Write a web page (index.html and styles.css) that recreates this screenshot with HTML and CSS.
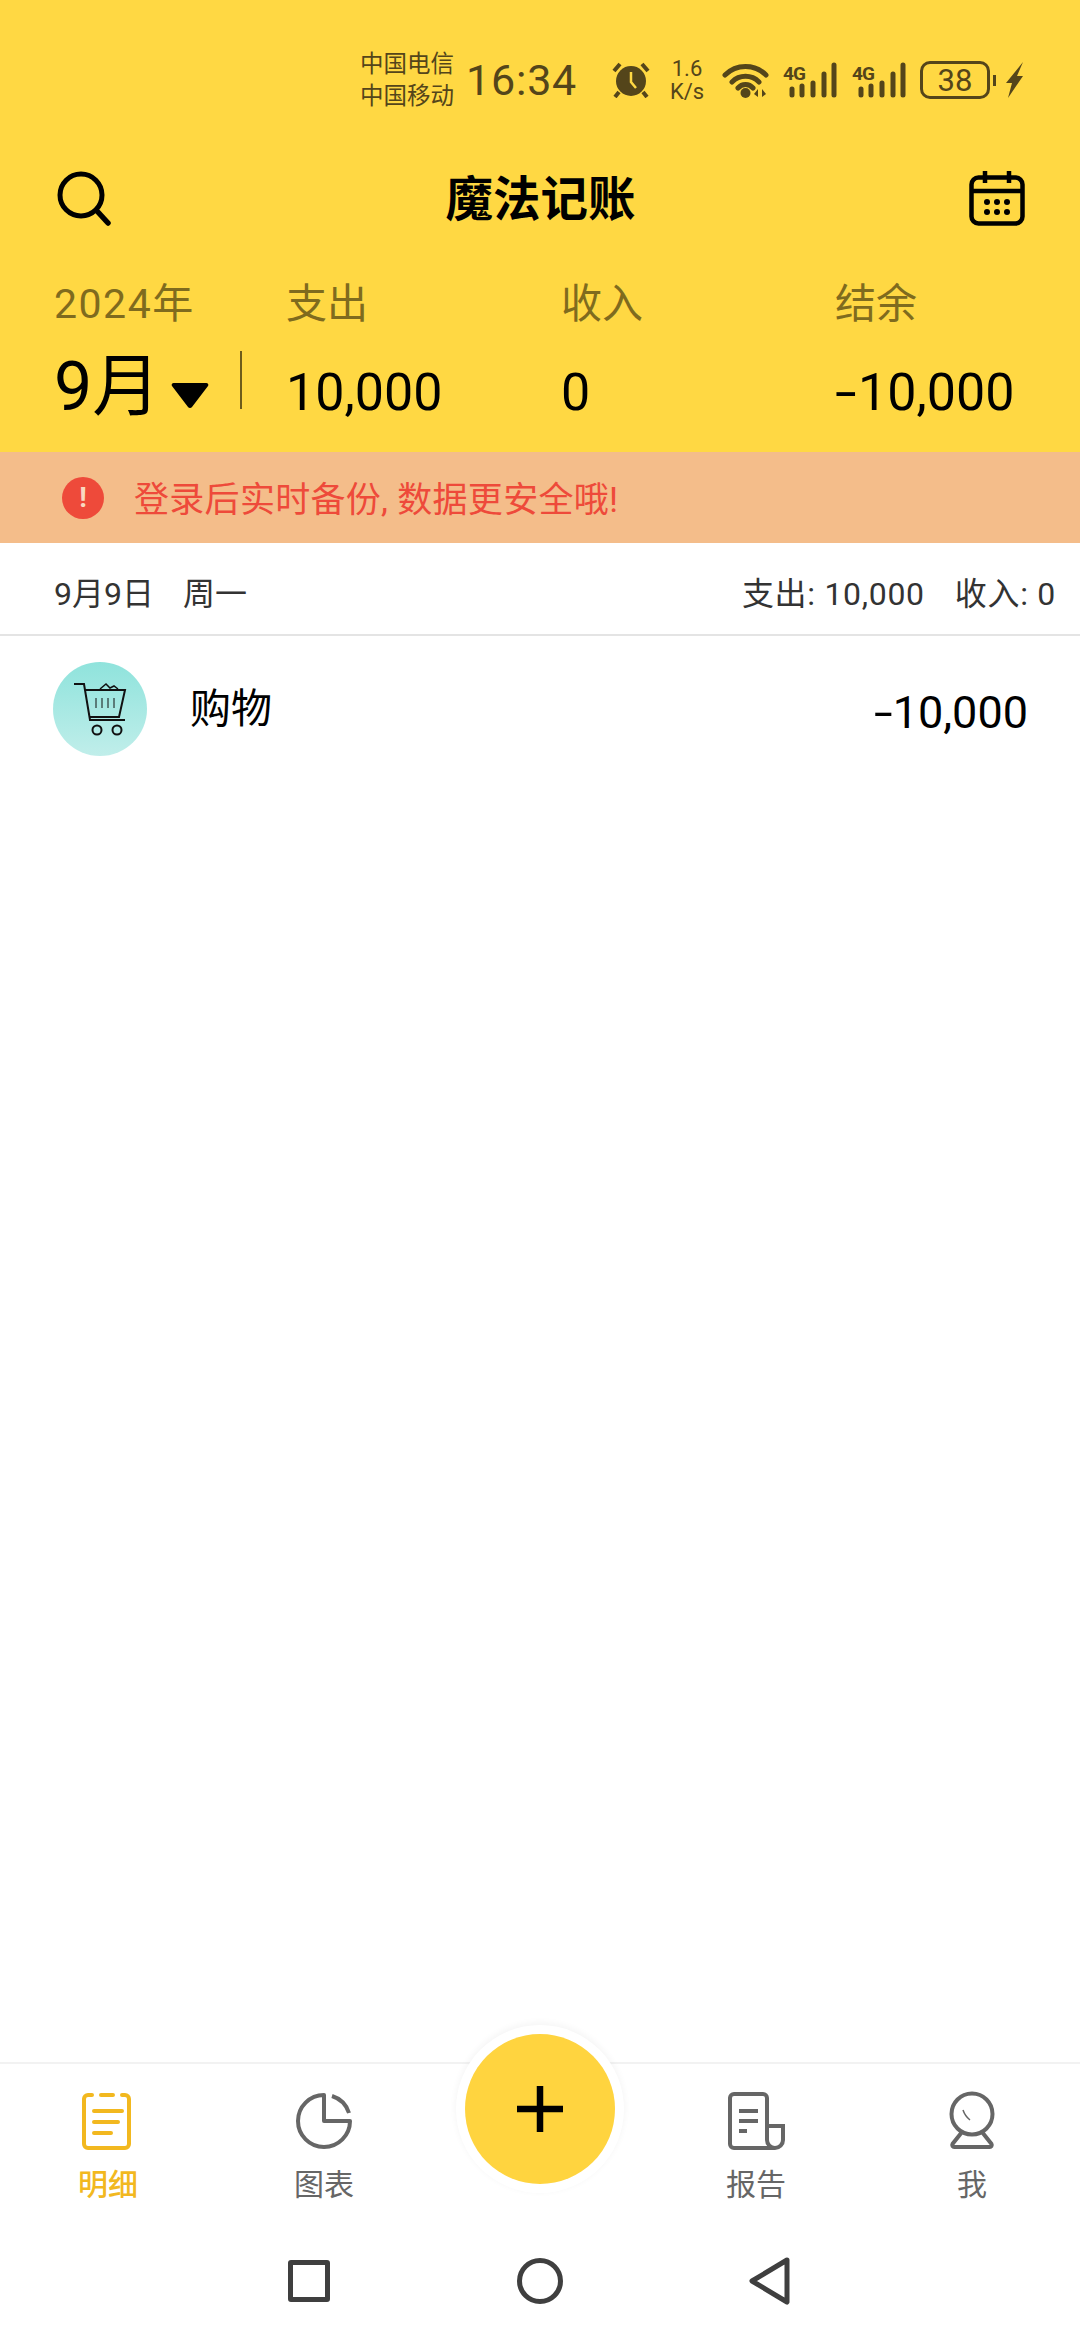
FILE: index.html
```html
<!DOCTYPE html>
<html lang="zh-CN">
<head>
    <meta charset="UTF-8">
    <meta name="viewport" content="width=device-width, initial-scale=1.0">
    <title>魔法记账</title>
    <link rel="stylesheet" href="styles.css">
</head>
<body>
    <div class="page">
        <header class="header">
            <div class="status-bar">
                <div class="carrier"><span>中国电信</span><span>中国移动</span></div>
                <div class="clock">16:34</div>
                <svg class="st-alarm" viewBox="0 0 38 36"><circle cx="19" cy="19" r="15" fill="#54451a"/><path d="M19 10v10l5 6" fill="none" stroke="#ffd843" stroke-width="2.5"/><path d="M2 9 8 2M36 9 30 2M7 30 3 35M31 30l4 5" stroke="#54451a" stroke-width="4" fill="none"/></svg>
                <div class="speed"><span>1.6</span><span>K/s</span></div>
                <svg class="st-wifi" viewBox="0 0 47 36"><path d="M3 13a29 29 0 0 1 41 0M10 20a19 19 0 0 1 27 0M16 26a10 10 0 0 1 15 0" fill="none" stroke="#54451a" stroke-width="5" stroke-linecap="round"/><circle cx="23.500" cy="31" r="5" fill="#54451a"/><path d="M36 27v8l-4-3zM40 27v8l4-3z" fill="#54451a"/></svg>
                <svg class="st-signal" viewBox="0 0 55 36"><text x="1" y="18" class="net">4G</text><g stroke="#54451a" stroke-width="5" stroke-linecap="round"><path d="M10 27v6M20 24v9M31 21v12M42 12v21M52 3v30"/></g></svg>
                <svg class="st-signal" viewBox="0 0 55 36"><text x="1" y="18" class="net">4G</text><g stroke="#54451a" stroke-width="5" stroke-linecap="round"><path d="M10 27v6M20 24v9M31 21v12M42 12v21M52 3v30"/></g></svg>
                <div class="battery"><span class="battery-body">38</span><span class="battery-nub"></span></div>
                <svg class="st-bolt" viewBox="0 0 18 36"><path d="M18 0 1 21h6L3 36l15-22h-6z" fill="#54451a"/></svg>
            </div>
            <div class="title-row">
                <svg class="icon-search" viewBox="0 0 56 56"><circle cx="25" cy="25" r="21" fill="none" stroke="#000" stroke-width="5"/><path d="M41 41l11 12" stroke="#000" stroke-width="5.500" stroke-linecap="round"/></svg>
                <h1 class="title">魔法记账</h1>
                <svg class="icon-cal" viewBox="0 0 56 56"><rect x="2.500" y="7.500" width="51" height="46" rx="7" fill="none" stroke="#000" stroke-width="4.500"/><path d="M2 21h52M16 1v12M40 1v12" stroke="#000" stroke-width="4.500" fill="none"/><g fill="#000"><circle cx="18" cy="32" r="3"/><circle cx="28" cy="32" r="3"/><circle cx="38" cy="32" r="3"/><circle cx="18" cy="42" r="3"/><circle cx="28" cy="42" r="3"/><circle cx="38" cy="42" r="3"/></g></svg>
            </div>
            <div class="summary">
                <div class="label label-year">2024年</div>
                <div class="label">支出</div>
                <div class="label">收入</div>
                <div class="label">结余</div>
                <div class="month-cell">
                    <span class="month">9月</span>
                    <svg class="caret" viewBox="0 0 38 28"><path d="M3 2h32a2 2 0 0 1 2 3L21 26a2.500 2.500 0 0 1-4 0L1 5a2 2 0 0 1 2-3z" fill="#000"/></svg>
                    <span class="month-line"></span>
                </div>
                <div class="value">10,000</div>
                <div class="value">0</div>
                <div class="value"><span class="minus">-</span>10,000</div>
            </div>
        </header>

        <div class="banner">
            <span class="banner-icon">!</span>
            <span class="banner-text">登录后实时备份, 数据更安全哦!</span>
        </div>

        <main class="list">
            <div class="day-head">
                <div class="day-date"><span>9月9日</span><span>周一</span></div>
                <div class="day-total"><span>支出: 10,000</span><span>收入: 0</span></div>
            </div>
            <div class="item">
                <div class="item-icon">
                    <svg viewBox="0 0 94 94"><g fill="none" stroke="#111" stroke-width="2"><path d="M21 22h10l6 36h35"/><path d="M32 28h40l-6 27H37"/><path d="M43 36v10M49 36v10M55 36v10M61 36v10" stroke-width="1"/><path d="M47 27l6-5 4 4 4-2 4 3" stroke-width="1.500"/><circle cx="44" cy="68" r="4.500"/><circle cx="64" cy="68" r="4.500"/></g></svg>
                </div>
                <div class="item-name">购物</div>
                <div class="item-amount"><span class="minus minus-sm">-</span>10,000</div>
            </div>
        </main>

        <footer class="footer">
            <nav class="tabs">
                <div class="tab tab-on">
                    <svg viewBox="0 0 60 60"><path d="M14 5h-4a4 4 0 0 0-4 4v45a4 4 0 0 0 4 4h37a4 4 0 0 0 4-4V9a4 4 0 0 0-4-4h-3M23 5h12M16 21h28M16 32h24M16 43h17" fill="none" stroke="#f2b81f" stroke-width="4" stroke-linecap="round"/></svg>
                    <span>明细</span>
                </div>
                <div class="tab">
                    <svg viewBox="0 0 60 60"><path d="M30 5a26 26 0 1 0 26 26H30zM38 6a26 26 0 0 1 17 17" fill="none" stroke="#666" stroke-width="4" stroke-linejoin="round"/></svg>
                    <span>图表</span>
                </div>
                <div class="tab tab-gap"></div>
                <div class="tab">
                    <svg viewBox="0 0 60 60"><path d="M49 58H8a4 4 0 0 1-4-4V8a4 4 0 0 1 4-4h29a4 4 0 0 1 4 4v42a8 8 0 0 0 8 8 8 8 0 0 0 8-8V36H41M13 21h19M13 31h19M13 41h8" fill="none" stroke="#666" stroke-width="4"/></svg>
                    <span>报告</span>
                </div>
                <div class="tab">
                    <svg viewBox="0 0 60 60"><circle cx="30" cy="24" r="20.500" fill="none" stroke="#666" stroke-width="4"/><path d="M20 42 10.500 54a2 2 0 0 0 2 3h35a2 2 0 0 0 2-3L40 42" fill="none" stroke="#666" stroke-width="4"/><path d="M21 20q2 6 7 10" fill="none" stroke="#666" stroke-width="1.500"/></svg>
                    <span>我</span>
                </div>
            </nav>
            <div class="nav-bar">
                <span class="nav-square"></span>
                <span class="nav-circle"></span>
                <svg class="nav-back" viewBox="0 0 42 48"><path d="M38 3 3 24l35 21z" fill="none" stroke="#3f3f3f" stroke-width="5" stroke-linejoin="round"/></svg>
            </div>
            <div class="fab"><svg viewBox="0 0 46 46"><path d="M23 0v46M0 23h46" stroke="#000" stroke-width="6.500"/></svg></div>
        </footer>
    </div>
</body>
</html>
```

FILE: styles.css
```css
* {
    box-sizing: border-box;
}
body {
    margin: 0;
    background: #fff;
    font-family: Roboto, "Noto Sans CJK SC", sans-serif;
    color: #000;
}
svg {
    display: block;
}
.page {
    width: 1080px;
    height: 2340px;
    display: flex;
    flex-direction: column;
}

/* header */
.header {
    height: 452px;
    background: #ffd843;
    display: flex;
    flex-direction: column;
}
.status-bar {
    height: 80px;
    margin-top: 40px;
    padding-right: 57px;
    display: flex;
    justify-content: flex-end;
    align-items: center;
    color: #54451a;
}
.carrier {
    display: flex;
    flex-direction: column;
    font-size: 23.500px;
    line-height: 32px;
    white-space: nowrap;
    width: 94px;
    margin-right: 12px;
}
.clock {
    width: 109px;
    font-size: 43px;
    letter-spacing: 0.8px;
    margin-right: 37px;
}
.st-alarm {
    width: 38px;
    height: 36px;
    margin-right: 19px;
}
.speed {
    width: 36px;
    margin-right: 17px;
    display: flex;
    flex-direction: column;
    align-items: center;
    font-size: 22px;
    line-height: 23px;
}
.st-wifi {
    width: 47px;
    height: 36px;
    margin-right: 13px;
}
.st-signal {
    width: 55px;
    height: 36px;
    margin-right: 14px;
}
.net {
    font-size: 19px;
    font-weight: 700;
    letter-spacing: -1px;
    fill: #54451a;
}
.battery {
    width: 76px;
    display: flex;
    align-items: center;
    margin-right: 9px;
}
.battery-body {
    width: 70px;
    height: 38px;
    border: 3.500px solid #54451a;
    border-radius: 10px;
    display: flex;
    align-items: center;
    justify-content: center;
    font-size: 31px;
}
.battery-nub {
    width: 3px;
    height: 11px;
    margin-left: 3px;
    background: #54451a;
}
.st-bolt {
    width: 18px;
    height: 36px;
}
.title-row {
    height: 156px;
    padding: 0 55px 0 56px;
    display: flex;
    justify-content: space-between;
    align-items: center;
}
.icon-search,
.icon-cal {
    width: 56px;
    height: 56px;
}
.title {
    margin: -5px 0 0;
    font-size: 47.500px;
    font-weight: 700;
}
.summary {
    padding-left: 54px;
    display: grid;
    grid-template-columns: 232px 275px 274px 1fr;
    grid-template-rows: 52px 124px;
    align-items: center;
}
.label {
    font-size: 41px;
    color: #7f6b1e;
    white-space: nowrap;
    margin-top: -5px;
}
.label-year {
    letter-spacing: 1.500px;
}
.value {
    font-size: 52px;
    padding-top: 4px;
}
.minus {
    display: inline-block;
    width: 23px;
    transform: scaleX(1.5);
    transform-origin: left;
}
.month-cell {
    display: flex;
    align-items: center;
    height: 72px;
    margin-bottom: 20px;
}
.month {
    font-size: 68px;
    width: 117px;
    white-space: nowrap;
}
.caret {
    width: 38px;
    height: 28px;
    margin-top: 30px;
}
.month-line {
    width: 1.500px;
    height: 58px;
    margin-left: 31px;
    background: #6e5c1a;
}

/* login banner */
.banner {
    height: 91px;
    padding-left: 62px;
    background: #f4bd8a;
    display: flex;
    align-items: center;
}
.banner-icon {
    width: 42px;
    height: 42px;
    margin-right: 30px;
    border-radius: 50%;
    background: #ee4a3a;
    color: #f9d9c0;
    font-size: 28px;
    font-weight: 700;
    display: flex;
    align-items: center;
    justify-content: center;
}
.banner-text {
    font-size: 35px;
    letter-spacing: 0.3px;
    color: #ee4a3a;
    white-space: nowrap;
    margin-top: -3px;
}

/* list */
.list {
    flex: 1;
}
.day-head {
    height: 93px;
    padding: 4px 24px 0 54px;
    border-bottom: 2px solid #e4e4e4;
    display: flex;
    justify-content: space-between;
    align-items: center;
    font-size: 32px;
    color: #333;
}
.day-date span {
    margin-right: 29px;
}
.day-total {
    letter-spacing: 0.7px;
}
.day-total span {
    margin-left: 30px;
}
.item {
    height: 146px;
    padding: 0 52px 0 53px;
    display: flex;
    align-items: center;
}
.item-icon {
    width: 94px;
    height: 94px;
    margin-right: 43px;
    border-radius: 50%;
    background: linear-gradient(#8fe3dc, #c0eeea);
}
.item-name {
    flex: 1;
    font-size: 41px;
    margin-top: -8px;
}
.item-amount {
    font-size: 45px;
    margin-top: 6px;
}
.minus-sm {
    width: 19px;
}

/* bottom tabs */
.footer {
    position: relative;
    height: 278px;
    border-top: 2px solid #f2f2f2;
}
.tabs {
    height: 156px;
    display: grid;
    grid-template-columns: repeat(5, 216px);
}
.tab {
    display: flex;
    flex-direction: column;
    align-items: center;
    padding-top: 26px;
    font-size: 30px;
    line-height: 44px;
    color: #666;
}
.tab svg {
    width: 60px;
    height: 60px;
    margin-bottom: 13px;
}
.tab-on {
    color: #f2b81f;
    font-weight: 500;
}
.nav-bar {
    height: 120px;
    padding-top: 2px;
    display: grid;
    grid-template-columns: 288px 42px 187px 46px 186px 42px;
    align-items: center;
}
.nav-square {
    grid-column: 2;
    width: 42px;
    height: 42px;
    border: 5px solid #3f3f3f;
    border-radius: 3px;
}
.nav-circle {
    grid-column: 4;
    width: 46px;
    height: 46px;
    border: 5px solid #3f3f3f;
    border-radius: 50%;
}
.nav-back {
    grid-column: 6;
    width: 42px;
    height: 48px;
}
.fab {
    position: absolute;
    left: 465px;
    top: -30px;
    width: 150px;
    height: 150px;
    border-radius: 50%;
    background: #ffd43f;
    box-shadow: 0 0 0 9px #fff, 0 -2px 6px 10px rgba(0, 0, 0, 0.04);
    display: flex;
    align-items: center;
    justify-content: center;
}
.fab svg {
    width: 46px;
    height: 46px;
}
```
